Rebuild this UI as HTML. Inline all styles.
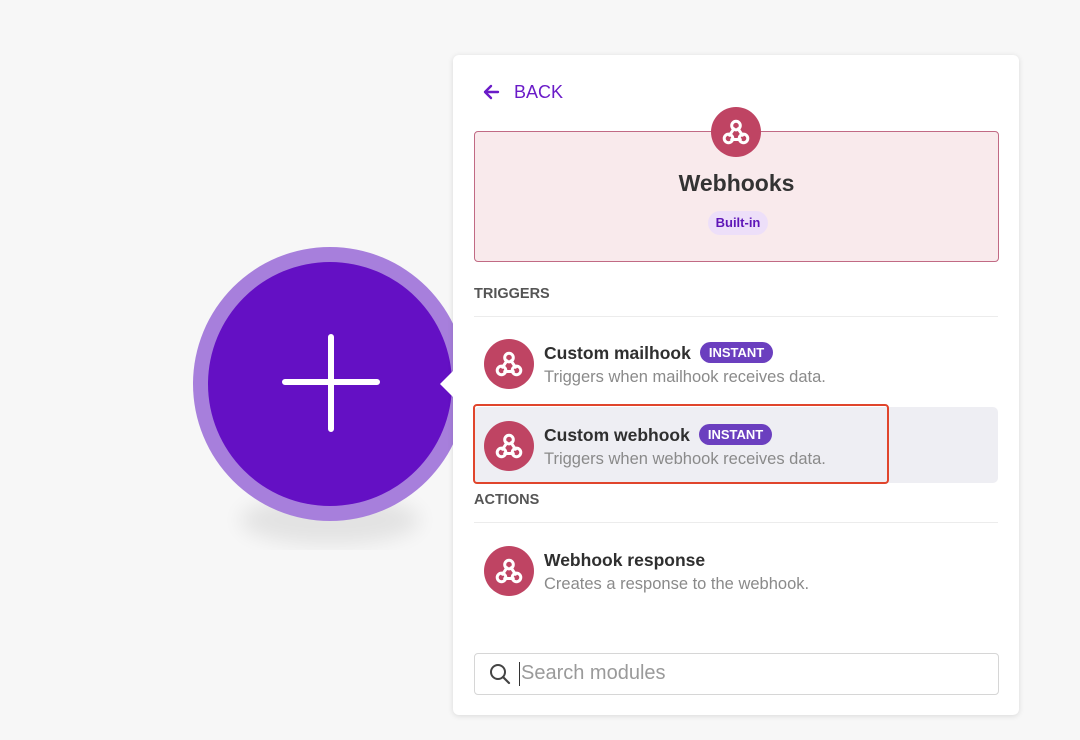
<!DOCTYPE html>
<html><head><meta charset="utf-8"><style>
body{margin:0;width:1080px;height:740px;background:#f7f7f7;font-family:"Liberation Sans",sans-serif;position:relative;overflow:hidden}
.abs{position:absolute}
.panel{left:453px;top:55px;width:566px;height:660px;background:#fff;border-radius:6px;box-shadow:0 1px 6px rgba(0,0,0,.12)}
.ic{position:absolute;width:50px;height:50px;border-radius:50%;background:#bf4463}
.ic svg{position:absolute;left:10px;top:10px}
.t{font-size:17.5px;font-weight:bold;color:#2f2f2f}
.d{font-size:16.5px;color:#8a8a8a}
.badge{display:inline-block;background:#6b3fbf;color:#fff;font-size:13px;font-weight:bold;border-radius:11px;padding:3px 9px;margin-left:9px;vertical-align:2px}
.sec{font-size:14.5px;font-weight:bold;color:#555;left:474px}
.hr{left:474px;width:524px;height:1px;background:#ececec}
</style></head><body>
<svg class="abs" style="left:0;top:0" width="1080" height="740">
<defs><filter id="b"><feGaussianBlur stdDeviation="10"/></filter></defs>
<ellipse cx="330" cy="520" rx="90" ry="25" fill="#000" opacity=".08" filter="url(#b)"/>
<circle cx="330" cy="384" r="137" fill="#a77fdc"/>
<circle cx="330" cy="384" r="122" fill="#6410c4"/>
<path d="M285 382H377M331 337V429" stroke="#fff" stroke-width="6" stroke-linecap="round"/>
</svg>
<div class="abs panel"></div>
<svg class="abs" style="left:438px;top:370px" width="20" height="28"><path d="M16 0 L2 14 L16 28Z" fill="#fff"/></svg>
<svg class="abs" style="left:482px;top:83px" width="18" height="18"><path d="M16 9H3M9 3L3 9L9 15" stroke="#6a1bc8" stroke-width="2.4" fill="none" stroke-linecap="round" stroke-linejoin="round"/></svg>
<div class="abs" style="left:514px;top:82px;font-size:18px;color:#6a1bc8">BACK</div>
<div class="abs" style="left:474px;top:131px;width:523px;height:129px;background:#f9eaec;border:1.5px solid #c16a84;border-radius:4px"></div>
<div class="ic" style="left:711px;top:107px"><svg width="30" height="30" viewBox="0 0 28 28" fill="none" stroke="#fff" stroke-width="2.8" stroke-linecap="round"><circle cx="14" cy="8" r="4"/><circle cx="7" cy="20" r="4"/><circle cx="21" cy="20" r="4"/><path d="M12 11L8 17M10 21H18M16 11L20 17"/></svg></div>
<div class="abs" style="left:474px;width:525px;top:170px;text-align:center;font-size:23px;font-weight:bold;color:#333">Webhooks</div>
<div class="abs" style="left:708px;top:211px;width:60px;height:24px;border-radius:12px;background:#eddff9;color:#5f16b8;font-size:13px;font-weight:bold;text-align:center;line-height:24px">Built-in</div>
<div class="abs sec" style="top:286px">TRIGGERS</div>
<div class="abs hr" style="top:316px"></div>
<div class="ic" style="left:484px;top:339px"><svg width="30" height="30" viewBox="0 0 28 28" fill="none" stroke="#fff" stroke-width="2.8" stroke-linecap="round"><circle cx="14" cy="8" r="4"/><circle cx="7" cy="20" r="4"/><circle cx="21" cy="20" r="4"/><path d="M12 11L8 17M10 21H18M16 11L20 17"/></svg></div>
<div class="abs t" style="left:544px;top:342px">Custom mailhook<span class="badge">INSTANT</span></div>
<div class="abs d" style="left:544px;top:368px">Triggers when mailhook receives data.</div>
<div class="abs" style="left:474px;top:407px;width:524px;height:76px;background:#eeeef3;border-radius:5px"></div>
<div class="abs" style="left:473px;top:404px;width:412px;height:76px;border:2.5px solid #e0452c;border-radius:4px"></div>
<div class="ic" style="left:484px;top:421px"><svg width="30" height="30" viewBox="0 0 28 28" fill="none" stroke="#fff" stroke-width="2.8" stroke-linecap="round"><circle cx="14" cy="8" r="4"/><circle cx="7" cy="20" r="4"/><circle cx="21" cy="20" r="4"/><path d="M12 11L8 17M10 21H18M16 11L20 17"/></svg></div>
<div class="abs t" style="left:544px;top:424px">Custom webhook<span class="badge">INSTANT</span></div>
<div class="abs d" style="left:544px;top:450px">Triggers when webhook receives data.</div>
<div class="abs sec" style="top:492px">ACTIONS</div>
<div class="abs hr" style="top:522px"></div>
<div class="ic" style="left:484px;top:546px"><svg width="30" height="30" viewBox="0 0 28 28" fill="none" stroke="#fff" stroke-width="2.8" stroke-linecap="round"><circle cx="14" cy="8" r="4"/><circle cx="7" cy="20" r="4"/><circle cx="21" cy="20" r="4"/><path d="M12 11L8 17M10 21H18M16 11L20 17"/></svg></div>
<div class="abs t" style="left:544px;top:550px">Webhook response</div>
<div class="abs d" style="left:544px;top:575px">Creates a response to the webhook.</div>
<div class="abs" style="left:474px;top:653px;width:523px;height:40px;border:1px solid #d6d6d6;border-radius:4px"></div>
<svg class="abs" style="left:488px;top:662px" width="24" height="24"><circle cx="10" cy="10" r="7" stroke="#444" stroke-width="2" fill="none"/><path d="M15 15L21 21" stroke="#444" stroke-width="2.2" stroke-linecap="round"/></svg>
<div class="abs" style="left:519px;top:662px;width:1px;height:24px;background:#333"></div>
<div class="abs" style="left:521px;top:662px;font-size:20px;color:#9a9a9a">Search modules</div>
</body></html>
